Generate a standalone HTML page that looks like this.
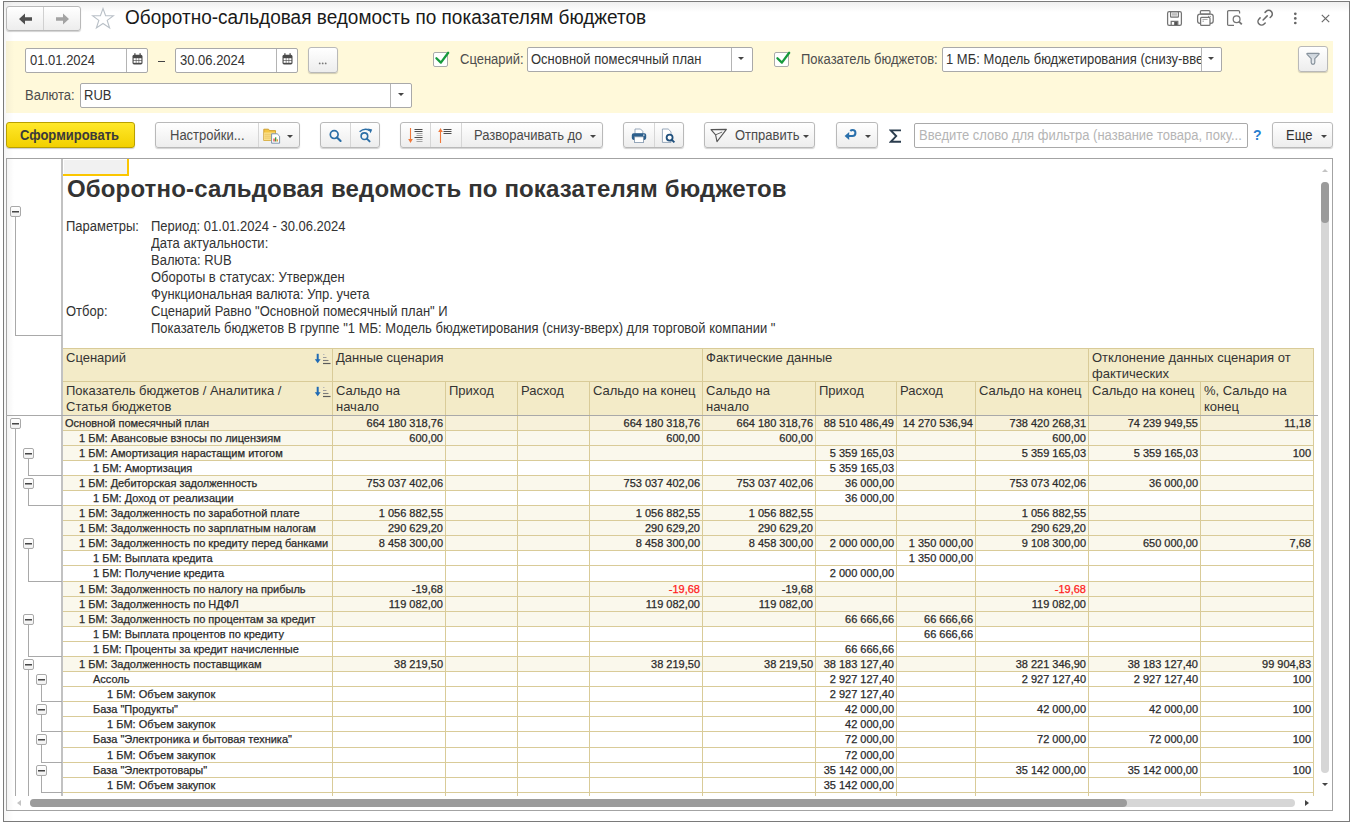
<!DOCTYPE html>
<html><head><meta charset="utf-8">
<style>
*{box-sizing:border-box;}
html,body{margin:0;padding:0;}
body{width:1350px;height:822px;position:relative;overflow:hidden;background:#fff;font-family:"Liberation Sans",sans-serif;color:#333;}
.a{position:absolute;}
#win{left:3px;top:1px;width:1347px;height:821px;border:1px solid #7a7a7a;}
#tgrad{left:4px;top:2px;width:1345px;height:10px;background:linear-gradient(#f0f0f0,#ffffff);}
.btn{position:absolute;border:1px solid #b9b9b9;border-radius:3px;background:linear-gradient(#ffffff,#ededed);box-shadow:0 1px 1px rgba(0,0,0,0.18);}
.sep{position:absolute;top:0;bottom:0;width:1px;background:#d0d0d0;}
.fld{position:absolute;border:1px solid #a9a9a9;border-radius:2px;background:#fff;font-size:13px;color:#333;}
.lbl{position:absolute;font-size:13px;color:#4d4d4d;white-space:nowrap;}
.t13{font-size:13px;white-space:nowrap;}
.ty{transform:scaleY(1.1);transform-origin:0 80%;}
#ypanel{left:6px;top:41px;width:1327px;height:72px;background:linear-gradient(90deg,#f6f0d3,#fff9da 8px);}
</style><style>
.gbox{width:11px;height:11px;border:1px solid #a9a9a9;border-radius:2px;background:linear-gradient(#ffffff,#f0f0f0);}
.gbox:after{content:"";position:absolute;left:1px;top:4px;width:7px;height:1px;background:#474747;box-shadow:0 1px 0 #9a9a9a;}
.r{font-size:11px;line-height:14px;color:#2a2a2a;white-space:nowrap;-webkit-text-stroke-width:0.25px;}
</style></head>
<body>
<div id="win" class="a"></div>
<div id="tgrad" class="a"></div>
<div class="a" style="left:4px;top:2px;width:10px;height:819px;background:linear-gradient(90deg,rgba(0,0,0,0.035),rgba(0,0,0,0));"></div>

<!-- nav -->
<div class="btn" style="left:6px;top:6px;width:75px;height:25px;">
  <div class="sep" style="left:36px;"></div>
  <svg class="a" style="left:11px;top:6px" width="16" height="12" viewBox="0 0 16 12"><path d="M1 6 L7 0.5 L7 4.3 L14 4.3 L14 7.7 L7 7.7 L7 11.5 Z" fill="#4f4f4f"/></svg>
  <svg class="a" style="left:47px;top:6px" width="16" height="12" viewBox="0 0 16 12"><path d="M15 6 L9 0.5 L9 4.3 L2 4.3 L2 7.7 L9 7.7 L9 11.5 Z" fill="#a3a3a3"/></svg>
</div>
<svg class="a" style="left:91px;top:7px" width="24" height="23" viewBox="0 0 24 23"><path d="M12 1.5 L14.6 8.6 L22.5 8.7 L16.2 13.4 L18.6 21 L12 16.5 L5.4 21 L7.8 13.4 L1.5 8.7 L9.4 8.6 Z" fill="none" stroke="#b9c0c7" stroke-width="1.1"/></svg>
<div class="a" style="left:125px;top:7px;font-size:19px;color:#1a1a1a;white-space:nowrap;transform:scaleY(1.08);transform-origin:0 80%;">Оборотно-сальдовая ведомость по показателям бюджетов</div>

<!-- title right icons -->
<svg class="a" style="left:1166px;top:10px" width="17" height="17" viewBox="0 0 17 17" fill="none" stroke="#747474" stroke-width="1.25">
  <rect x="1.6" y="1.6" width="13.8" height="13.8" rx="1.6"/>
  <rect x="4.6" y="1.6" width="7.8" height="5.6" rx="0.6"/>
  <path d="M6 3.3H11M6 4.6H11M6 5.9H11" stroke-width="0.7" stroke="#9a9a9a"/>
  <path d="M5.2 15.4V11.4H11.8V15.4"/>
  <rect x="8.2" y="12" width="3.2" height="3" fill="#555" stroke="none"/>
</svg>
<svg class="a" style="left:1196px;top:9px" width="19" height="18" viewBox="0 0 19 18" fill="none" stroke="#747474" stroke-width="1.25">
  <rect x="4.4" y="1.6" width="9.6" height="3.6" rx="1"/>
  <rect x="1.6" y="5.2" width="15.6" height="9.2" rx="2.4"/>
  <rect x="4.6" y="8.4" width="9.4" height="8" rx="1" fill="#fff"/>
  <path d="M6.4 10.4H11.6M6.4 12.2H8" stroke-width="0.8" stroke="#8c8c8c"/>
  <path d="M12.6 6.9V8M14.2 6.9V8" stroke-width="0.9"/>
</svg>
<svg class="a" style="left:1226px;top:9px" width="18" height="18" viewBox="0 0 18 18" fill="none" stroke="#747474" stroke-width="1.25">
  <path d="M8 16.4H2.8Q1.6 16.4 1.6 15.2V2.8Q1.6 1.6 2.8 1.6H12.4Q13.6 1.6 13.6 2.8V4.6"/>
  <circle cx="10.6" cy="10.2" r="3.4"/>
  <path d="M13 12.6L15.8 15.4" stroke-width="1.8"/>
</svg>
<svg class="a" style="left:1256px;top:9px" width="18" height="18" viewBox="0 0 18 18" fill="none" stroke="#6a6a6a" stroke-width="1.5" stroke-linecap="round">
  <path d="M4.1 8.9L3.05 9.95A3.6 3.6 0 0 0 8.15 15.05L9.2 14"/>
  <path d="M9.1 3.4L10.15 2.35A3.6 3.6 0 0 1 15.25 7.45L14.2 8.5"/>
  <path d="M7.1 11L11.2 6.9"/>
</svg>
<svg class="a" style="left:1292px;top:11px" width="7" height="15" viewBox="0 0 7 15"><circle cx="3.3" cy="2.8" r="1.35" fill="#666"/><circle cx="3.3" cy="7.4" r="1.35" fill="#666"/><circle cx="3.3" cy="12" r="1.35" fill="#666"/></svg>
<svg class="a" style="left:1320px;top:13px" width="11" height="11" viewBox="0 0 11 11"><path d="M1.8 1.8L9.2 9.2M9.2 1.8L1.8 9.2" stroke="#6a6a6a" stroke-width="1.2"/></svg>

<!-- yellow panel -->
<div id="ypanel" class="a"></div>
<div class="fld" style="left:25px;top:48px;width:123px;height:25px;">
  <div class="a ty" style="left:4px;top:4px;">01.01.2024</div>
  <div class="sep" style="left:100px;background:#b4b4b4"></div>
  <svg class="a" style="left:106px;top:4px" width="11" height="12" viewBox="0 0 11 12"><rect x="0.5" y="1.8" width="10" height="9.6" rx="1.6" fill="#4a4a4a"/><g fill="#fff"><rect x="1.6" y="5.2" width="2.2" height="2"/><rect x="4.4" y="5.2" width="2.2" height="2"/><rect x="7.2" y="5.2" width="2.2" height="2"/><rect x="1.6" y="7.8" width="2.2" height="2"/><rect x="4.4" y="7.8" width="2.2" height="2"/><rect x="7.2" y="7.8" width="2.2" height="2"/></g><rect x="2.3" y="0.2" width="1.2" height="3" fill="#4a4a4a"/><rect x="7.5" y="0.2" width="1.2" height="3" fill="#4a4a4a"/></svg>
</div>
<div class="a" style="left:158px;top:61px;width:7px;height:1px;background:#444"></div>
<div class="fld" style="left:175px;top:48px;width:123px;height:25px;">
  <div class="a ty" style="left:4px;top:4px;">30.06.2024</div>
  <div class="sep" style="left:100px;background:#b4b4b4"></div>
  <svg class="a" style="left:106px;top:4px" width="11" height="12" viewBox="0 0 11 12"><rect x="0.5" y="1.8" width="10" height="9.6" rx="1.6" fill="#4a4a4a"/><g fill="#fff"><rect x="1.6" y="5.2" width="2.2" height="2"/><rect x="4.4" y="5.2" width="2.2" height="2"/><rect x="7.2" y="5.2" width="2.2" height="2"/><rect x="1.6" y="7.8" width="2.2" height="2"/><rect x="4.4" y="7.8" width="2.2" height="2"/><rect x="7.2" y="7.8" width="2.2" height="2"/></g><rect x="2.3" y="0.2" width="1.2" height="3" fill="#4a4a4a"/><rect x="7.5" y="0.2" width="1.2" height="3" fill="#4a4a4a"/></svg>
</div>
<div class="btn" style="left:308px;top:47px;width:30px;height:26px;">
  <svg class="a" style="left:9px;top:14px" width="11" height="4" viewBox="0 0 11 4"><circle cx="1.7" cy="1.4" r="0.9" fill="#777"/><circle cx="4.7" cy="1.4" r="0.9" fill="#777"/><circle cx="7.7" cy="1.4" r="0.9" fill="#777"/></svg>
</div>
<div class="a chk" style="left:433px;top:52px;width:15px;height:15px;border:1px solid #ababab;border-radius:2px;background:#fff;">
  <svg class="a" style="left:-1px;top:-4px;overflow:visible" width="17" height="17" viewBox="0 0 17 17"><path d="M3.4 9.2L7.9 13.6L15.2 3.8" fill="none" stroke="#179a3c" stroke-width="2.3" stroke-linecap="round" stroke-linejoin="round"/></svg>
</div>
<div class="lbl ty" style="left:460px;top:52px;">Сценарий:</div>
<div class="fld" style="left:527px;top:47px;width:226px;height:25px;">
  <div class="a ty" style="left:3px;top:4px;">Основной помесячный план</div>
  <div class="sep" style="left:203px;background:#b4b4b4"></div>
  <div class="a" style="left:210px;top:9px;width:0;height:0;border-left:3px solid transparent;border-right:3px solid transparent;border-top:3px solid #444"></div>
</div>
<div class="a chk" style="left:774px;top:52px;width:15px;height:15px;border:1px solid #ababab;border-radius:2px;background:#fff;">
  <svg class="a" style="left:-1px;top:-4px;overflow:visible" width="17" height="17" viewBox="0 0 17 17"><path d="M3.4 9.2L7.9 13.6L15.2 3.8" fill="none" stroke="#179a3c" stroke-width="2.3" stroke-linecap="round" stroke-linejoin="round"/></svg>
</div>
<div class="lbl ty" style="left:801px;top:52px;">Показатель бюджетов:</div>
<div class="fld" style="left:942px;top:47px;width:280px;height:25px;overflow:hidden;">
  <div class="a ty" style="left:3px;top:4px;width:256px;overflow:hidden;white-space:nowrap;">1 МБ: Модель бюджетирования (снизу-вверх)</div>
  <div class="sep" style="left:258px;background:#b4b4b4"></div>
  <div class="a" style="left:265px;top:9px;width:0;height:0;border-left:3px solid transparent;border-right:3px solid transparent;border-top:3px solid #444"></div>
</div>
<div class="btn" style="left:1298px;top:46px;width:30px;height:26px;">
  <svg class="a" style="left:7px;top:5px" width="15" height="14" viewBox="0 0 15 14"><defs><linearGradient id="fg" x1="0" y1="0" x2="0" y2="1"><stop offset="0" stop-color="#c9d1d9"/><stop offset="1" stop-color="#eef1f4"/></linearGradient></defs><path d="M1.6 1.3H12.4Q13.6 1.3 12.9 2.3L8.8 6.6V10.6Q8.8 12.3 7 12.3Q5.2 12.3 5.2 10.6V6.6L1.1 2.3Q0.4 1.3 1.6 1.3Z" fill="url(#fg)" stroke="#87929c" stroke-width="1.2" stroke-linejoin="round"/></svg>
</div>
<div class="lbl ty" style="left:25px;top:88px;">Валюта:</div>
<div class="fld" style="left:80px;top:83px;width:332px;height:25px;">
  <div class="a ty" style="left:3px;top:4px;">RUB</div>
  <div class="sep" style="left:309px;background:#b4b4b4"></div>
  <div class="a" style="left:317px;top:9px;width:0;height:0;border-left:3px solid transparent;border-right:3px solid transparent;border-top:3px solid #444"></div>
</div>

<!-- toolbar -->
<div class="a" style="left:6px;top:122px;width:129px;height:26px;border:1px solid #b9a000;border-radius:3px;background:linear-gradient(#ffe82a,#f2d000);box-shadow:0 1px 1px rgba(0,0,0,0.2);">
  <div class="a t13 ty" style="left:13px;top:5px;font-weight:bold;color:#3a3a3a;">Сформировать</div>
</div>
<div class="btn" style="left:155px;top:122px;width:145px;height:26px;">
  <div class="a t13 ty" style="left:14px;top:5px;color:#4a4a4a;">Настройки...</div>
  <div class="sep" style="left:102px;background:#d6d6d6"></div>
  <svg class="a" style="left:107px;top:4px" width="19" height="17" viewBox="0 0 19 17">
    <path d="M0.8 2.2H5.5L6.6 3.6H12.5V13.5H0.8Z" fill="#f4c542" stroke="#c99a2a" stroke-width="0.9"/>
    <path d="M1 5.5H12.3V13.3H1Z" fill="#fbe08a"/>
    <path d="M1.5 7.3H12M1.5 9.2H12M1.5 11.1H12" stroke="#e2b850" stroke-width="0.6"/>
    <path d="M8.6 6.8H14.2L16.6 9.2V16.2H8.6Z" fill="#fff" stroke="#6f8aa6" stroke-width="0.9"/>
    <rect x="10.4" y="11.5" width="1.3" height="3" fill="#e04040"/><rect x="12" y="10.3" width="1.3" height="4.2" fill="#40a040"/><rect x="13.6" y="12.3" width="1.3" height="2.2" fill="#e09030"/>
  </svg>
  <div class="a" style="left:131px;top:12px;width:0;height:0;border-left:3px solid transparent;border-right:3px solid transparent;border-top:3px solid #444"></div>
</div>
<div class="btn" style="left:320px;top:122px;width:60px;height:26px;">
  <div class="sep" style="left:29px;background:#d6d6d6"></div>
  <svg class="a" style="left:7px;top:5px" width="15" height="15" viewBox="0 0 15 15"><circle cx="6.2" cy="6.6" r="3.9" fill="none" stroke="#2b6ea6" stroke-width="1.7"/><path d="M9 9.4L12.6 13" stroke="#2b6ea6" stroke-width="2.1" stroke-linecap="round"/></svg>
  <svg class="a" style="left:36px;top:4px" width="17" height="17" viewBox="0 0 17 17"><circle cx="7.4" cy="9.2" r="3.3" fill="none" stroke="#2b6ea6" stroke-width="1.6"/><path d="M9.8 11.6L12.6 14.4" stroke="#2b6ea6" stroke-width="1.9" stroke-linecap="round"/><path d="M2.6 4.8Q7.6 0.6 12.6 3.6" fill="none" stroke="#2b6ea6" stroke-width="1.5"/><path d="M11 1.6L15.2 2.4L13.6 6.2Z" fill="#2b6ea6"/></svg>
</div>
<div class="btn" style="left:400px;top:122px;width:203px;height:26px;">
  <div class="sep" style="left:29px;background:#d6d6d6"></div>
  <div class="sep" style="left:60px;background:#d6d6d6"></div>
  <svg class="a" style="left:5px;top:4px" width="20" height="18" viewBox="0 0 20 18"><path d="M4.5 1V14" stroke="#f0783a" stroke-width="1.1"/><path d="M2.2 12L4.5 16L6.8 12Z" fill="#f0783a"/><path d="M8.5 2.5H16.5M8.5 4.5H16.5M8.5 10.5H16.5" stroke="#3a3a3a" stroke-width="0.9"/><path d="M10.5 6.5H16.5M10.5 8.5H16.5M10.5 12.5H16.5M10.5 14.5H16.5" stroke="#9a9a9a" stroke-width="0.9"/></svg>
  <svg class="a" style="left:35px;top:4px" width="20" height="18" viewBox="0 0 20 18"><path d="M4.5 4V16" stroke="#f0783a" stroke-width="1.1"/><path d="M2.2 5L4.5 1L6.8 5Z" fill="#f0783a"/><path d="M7.5 2.5H15.5M7.5 4.5H15.5M7.5 6.5H15.5" stroke="#3a3a3a" stroke-width="0.9"/></svg>
  <div class="a t13 ty" style="left:73px;top:5px;color:#4a4a4a;">Разворачивать до</div>
  <div class="a" style="left:189px;top:12px;width:0;height:0;border-left:3px solid transparent;border-right:3px solid transparent;border-top:3px solid #444"></div>
</div>
<div class="btn" style="left:623px;top:122px;width:61px;height:26px;">
  <div class="sep" style="left:30px;background:#d6d6d6"></div>
  <svg class="a" style="left:7px;top:5px" width="16" height="16" viewBox="0 0 16 16"><path d="M4 1H9.5L11.8 3.3V6H4Z" fill="#fff" stroke="#7d93aa" stroke-width="0.8"/><rect x="0.8" y="5.3" width="14.4" height="6.6" rx="1.8" fill="#2c5f8c"/><rect x="3.6" y="8.8" width="8.8" height="5.8" fill="#fff" stroke="#7d93aa" stroke-width="0.8"/><rect x="12" y="6.6" width="1.6" height="1" fill="#fff"/></svg>
  <svg class="a" style="left:37px;top:5px" width="16" height="16" viewBox="0 0 16 16"><path d="M1.4 1H7.2L10 3.8V14.4H1.4Z" fill="#fff" stroke="#7d93aa" stroke-width="0.8"/><circle cx="8.6" cy="9.6" r="3" fill="#fff" stroke="#1f4f7c" stroke-width="1.8"/><path d="M10.6 11.6L13.4 14.4" stroke="#1f4f7c" stroke-width="2"/></svg>
</div>
<div class="btn" style="left:704px;top:122px;width:111px;height:26px;">
  <svg class="a" style="left:5px;top:5px" width="18" height="15" viewBox="0 0 18 15"><path d="M1 1.6L16.4 1.4L7 13.6L5.6 6.8Z" fill="none" stroke="#555" stroke-width="1.1" stroke-linejoin="round"/><path d="M5.6 6.8L12.2 4" stroke="#555" stroke-width="0.9"/></svg>
  <div class="a t13 ty" style="left:30px;top:5px;color:#4a4a4a;">Отправить</div>
  <div class="a" style="left:98px;top:12px;width:0;height:0;border-left:3px solid transparent;border-right:3px solid transparent;border-top:3px solid #444"></div>
</div>
<div class="btn" style="left:836px;top:122px;width:42px;height:26px;">
  <svg class="a" style="left:7px;top:5px" width="14" height="13" viewBox="0 0 14 13"><path d="M4.5 8H8.4Q11.4 8 11.4 5Q11.4 2 8.6 2Q7.2 2 6.3 2.9" fill="none" stroke="#2a70ac" stroke-width="2.1"/><path d="M0.6 8L5.2 4.1V11.9Z" fill="#2a70ac"/></svg>
  <div class="a" style="left:28px;top:12px;width:0;height:0;border-left:3px solid transparent;border-right:3px solid transparent;border-top:3px solid #444"></div>
</div>
<svg class="a" style="left:889px;top:128px" width="14" height="16" viewBox="0 0 14 16"><path d="M12 2.4H1.8L7.2 8.1L1.8 13.8H12" fill="none" stroke="#2b3d4e" stroke-width="1.9" stroke-linejoin="miter"/></svg>
<div class="fld" style="left:914px;top:123px;width:334px;height:25px;">
  <div class="a ty" style="left:4px;top:4px;color:#b5b5b5;">Введите слово для фильтра (название товара, поку...</div>
</div>
<div class="a" style="left:1253px;top:127px;font-size:14px;font-weight:bold;color:#2a7fd0;">?</div>
<div class="btn" style="left:1272px;top:122px;width:61px;height:26px;">
  <div class="a t13 ty" style="left:13px;top:5px;color:#333;">Еще</div>
  <div class="a" style="left:48px;top:12px;width:0;height:0;border-left:3px solid transparent;border-right:3px solid transparent;border-top:3px solid #444"></div>
</div>

<!-- report -->
<div class="a" style="left:6px;top:158px;width:1327px;height:653px;border:1px solid #a3a3a3;background:#fff;"></div>
<div class="a" style="left:7px;top:159px;width:7px;height:651px;background:linear-gradient(90deg,rgba(0,0,0,0.045),rgba(0,0,0,0));"></div>
<div class="a" style="left:63px;top:159px;width:66px;height:17px;background:#f1f1f1;border-right:2px solid #fbc600;border-bottom:2px solid #fbc600;box-shadow:inset 1px 1px 0 #fff;"></div>
<div class="a" style="left:67px;top:175px;font-size:24px;font-weight:bold;color:#333;white-space:nowrap;letter-spacing:0.15px;">Оборотно-сальдовая ведомость по показателям бюджетов</div>
<div class="a" style="left:66px;top:219px;font-size:13px;color:#333;white-space:nowrap;line-height:16px;transform:scaleY(1.1);transform-origin:0 12.5px;">Параметры:</div>
<div class="a" style="left:151px;top:219px;font-size:13px;color:#333;white-space:nowrap;line-height:16px;transform:scaleY(1.1);transform-origin:0 12.5px;">Период: 01.01.2024 - 30.06.2024</div>
<div class="a" style="left:151px;top:236px;font-size:13px;color:#333;white-space:nowrap;line-height:16px;transform:scaleY(1.1);transform-origin:0 12.5px;">Дата актуальности:</div>
<div class="a" style="left:151px;top:253px;font-size:13px;color:#333;white-space:nowrap;line-height:16px;transform:scaleY(1.1);transform-origin:0 12.5px;">Валюта: RUB</div>
<div class="a" style="left:151px;top:270px;font-size:13px;color:#333;white-space:nowrap;line-height:16px;transform:scaleY(1.1);transform-origin:0 12.5px;">Обороты в статусах: Утвержден</div>
<div class="a" style="left:151px;top:287px;font-size:13px;color:#333;white-space:nowrap;line-height:16px;transform:scaleY(1.1);transform-origin:0 12.5px;">Функциональная валюта: Упр. учета</div>
<div class="a" style="left:66px;top:304px;font-size:13px;color:#333;white-space:nowrap;line-height:16px;transform:scaleY(1.1);transform-origin:0 12.5px;">Отбор:</div>
<div class="a" style="left:151px;top:304px;font-size:13px;color:#333;white-space:nowrap;line-height:16px;transform:scaleY(1.1);transform-origin:0 12.5px;">Сценарий Равно "Основной помесячный план" И</div>
<div class="a" style="left:151px;top:321px;font-size:13px;color:#333;white-space:nowrap;line-height:16px;transform:scaleY(1.1);transform-origin:0 12.5px;">Показатель бюджетов В группе "1 МБ: Модель бюджетирования (снизу-вверх) для торговой компании "</div>
<div class="a" style="left:61px;top:159px;width:2px;height:637px;background:#c2c2c2;"></div>
<div class="a gbox" style="left:10px;top:206px;"></div>
<div class="a" style="left:15px;top:216px;width:1px;height:120px;background:#a9a9a9;"></div>
<div class="a" style="left:15px;top:335px;width:47px;height:1px;background:#a9a9a9;"></div>
<div class="a" style="left:63px;top:348px;width:1251px;height:67px;background:#f3ebc8;"></div>
<div class="a" style="left:63px;top:348px;width:1251px;height:1px;background:#d9cb98;"></div>
<div class="a" style="left:63px;top:381px;width:1251px;height:1px;background:#d9cb98;"></div>
<div class="a" style="left:66px;top:350px;font-size:13px;line-height:16px;color:#333;white-space:nowrap;">Сценарий</div>
<div class="a" style="left:66px;top:383px;font-size:13px;line-height:16px;color:#333;white-space:nowrap;">Показатель бюджетов / Аналитика /<br>Статья бюджетов</div>
<div class="a" style="left:336px;top:350px;font-size:13px;line-height:16px;color:#333;white-space:nowrap;">Данные сценария</div>
<div class="a" style="left:706px;top:350px;font-size:13px;line-height:16px;color:#333;white-space:nowrap;">Фактические данные</div>
<div class="a" style="left:1092px;top:350px;font-size:13px;line-height:16px;color:#333;white-space:nowrap;">Отклонение данных сценария от<br>фактических</div>
<div class="a" style="left:336px;top:383px;font-size:13px;line-height:16px;color:#333;white-space:nowrap;">Сальдо на<br>начало</div>
<div class="a" style="left:449px;top:383px;font-size:13px;line-height:16px;color:#333;white-space:nowrap;">Приход</div>
<div class="a" style="left:521px;top:383px;font-size:13px;line-height:16px;color:#333;white-space:nowrap;">Расход</div>
<div class="a" style="left:593px;top:383px;font-size:13px;line-height:16px;color:#333;white-space:nowrap;">Сальдо на конец</div>
<div class="a" style="left:706px;top:383px;font-size:13px;line-height:16px;color:#333;white-space:nowrap;">Сальдо на<br>начало</div>
<div class="a" style="left:819px;top:383px;font-size:13px;line-height:16px;color:#333;white-space:nowrap;">Приход</div>
<div class="a" style="left:900px;top:383px;font-size:13px;line-height:16px;color:#333;white-space:nowrap;">Расход</div>
<div class="a" style="left:979px;top:383px;font-size:13px;line-height:16px;color:#333;white-space:nowrap;">Сальдо на конец</div>
<div class="a" style="left:1092px;top:383px;font-size:13px;line-height:16px;color:#333;white-space:nowrap;">Сальдо на конец</div>
<div class="a" style="left:1204px;top:383px;font-size:13px;line-height:16px;color:#333;white-space:nowrap;">%, Сальдо на<br>конец</div>
<svg class="a" style="left:314px;top:353px" width="17" height="12" viewBox="0 0 17 12"><path d="M3.7 0.8V7" stroke="#1f6ab4" stroke-width="2"/><path d="M0.8 6.2L3.7 10.2L6.6 6.2Z" fill="#1f6ab4"/><path d="M9 1.5H10.5" stroke="#b8b8b8" stroke-width="1"/><path d="M9 4.5H12.5" stroke="#9a9a9a" stroke-width="1"/><path d="M9 7.5H14.5" stroke="#7a7a7a" stroke-width="1.1"/><path d="M9 10.5H16.5" stroke="#5a5a5a" stroke-width="1.2"/></svg>
<svg class="a" style="left:314px;top:386px" width="17" height="12" viewBox="0 0 17 12"><path d="M3.7 0.8V7" stroke="#1f6ab4" stroke-width="2"/><path d="M0.8 6.2L3.7 10.2L6.6 6.2Z" fill="#1f6ab4"/><path d="M9 1.5H10.5" stroke="#b8b8b8" stroke-width="1"/><path d="M9 4.5H12.5" stroke="#9a9a9a" stroke-width="1"/><path d="M9 7.5H14.5" stroke="#7a7a7a" stroke-width="1.1"/><path d="M9 10.5H16.5" stroke="#5a5a5a" stroke-width="1.2"/></svg>
<div class="a" style="left:332px;top:348px;width:1px;height:67px;background:#d9cb98;"></div>
<div class="a" style="left:702px;top:348px;width:1px;height:67px;background:#d9cb98;"></div>
<div class="a" style="left:1088px;top:348px;width:1px;height:67px;background:#d9cb98;"></div>
<div class="a" style="left:445px;top:381px;width:1px;height:34px;background:#d9cb98;"></div>
<div class="a" style="left:517px;top:381px;width:1px;height:34px;background:#d9cb98;"></div>
<div class="a" style="left:589px;top:381px;width:1px;height:34px;background:#d9cb98;"></div>
<div class="a" style="left:815px;top:381px;width:1px;height:34px;background:#d9cb98;"></div>
<div class="a" style="left:896px;top:381px;width:1px;height:34px;background:#d9cb98;"></div>
<div class="a" style="left:975px;top:381px;width:1px;height:34px;background:#d9cb98;"></div>
<div class="a" style="left:1200px;top:381px;width:1px;height:34px;background:#d9cb98;"></div>
<div class="a" style="left:1313px;top:348px;width:1px;height:67px;background:#d9cb98;"></div>
<div class="a" style="left:63px;top:416px;width:1250px;height:14px;background:#f7f1da;"></div>
<div class="a" style="left:63px;top:431px;width:1250px;height:14px;background:#faf8ec;"></div>
<div class="a" style="left:63px;top:446px;width:1250px;height:14px;background:#faf8ec;"></div>
<div class="a" style="left:63px;top:476px;width:1250px;height:14px;background:#faf8ec;"></div>
<div class="a" style="left:63px;top:506px;width:1250px;height:14px;background:#faf8ec;"></div>
<div class="a" style="left:63px;top:521px;width:1250px;height:14px;background:#faf8ec;"></div>
<div class="a" style="left:63px;top:536px;width:1250px;height:14px;background:#faf8ec;"></div>
<div class="a" style="left:63px;top:582px;width:1250px;height:14px;background:#faf8ec;"></div>
<div class="a" style="left:63px;top:597px;width:1250px;height:14px;background:#faf8ec;"></div>
<div class="a" style="left:63px;top:612px;width:1250px;height:14px;background:#faf8ec;"></div>
<div class="a" style="left:63px;top:657px;width:1250px;height:14px;background:#faf8ec;"></div>
<div class="a" style="left:63px;top:430px;width:1251px;height:1px;background:#d9cb98;"></div>
<div class="a" style="left:63px;top:445px;width:1251px;height:1px;background:#d9cb98;"></div>
<div class="a" style="left:63px;top:460px;width:1251px;height:1px;background:#d9cb98;"></div>
<div class="a" style="left:63px;top:475px;width:1251px;height:1px;background:#d9cb98;"></div>
<div class="a" style="left:63px;top:490px;width:1251px;height:1px;background:#d9cb98;"></div>
<div class="a" style="left:63px;top:505px;width:1251px;height:1px;background:#d9cb98;"></div>
<div class="a" style="left:63px;top:520px;width:1251px;height:1px;background:#d9cb98;"></div>
<div class="a" style="left:63px;top:535px;width:1251px;height:1px;background:#d9cb98;"></div>
<div class="a" style="left:63px;top:550px;width:1251px;height:1px;background:#d9cb98;"></div>
<div class="a" style="left:63px;top:565px;width:1251px;height:1px;background:#d9cb98;"></div>
<div class="a" style="left:63px;top:581px;width:1251px;height:1px;background:#d9cb98;"></div>
<div class="a" style="left:63px;top:596px;width:1251px;height:1px;background:#d9cb98;"></div>
<div class="a" style="left:63px;top:611px;width:1251px;height:1px;background:#d9cb98;"></div>
<div class="a" style="left:63px;top:626px;width:1251px;height:1px;background:#d9cb98;"></div>
<div class="a" style="left:63px;top:641px;width:1251px;height:1px;background:#d9cb98;"></div>
<div class="a" style="left:63px;top:656px;width:1251px;height:1px;background:#d9cb98;"></div>
<div class="a" style="left:63px;top:671px;width:1251px;height:1px;background:#d9cb98;"></div>
<div class="a" style="left:63px;top:686px;width:1251px;height:1px;background:#d9cb98;"></div>
<div class="a" style="left:63px;top:701px;width:1251px;height:1px;background:#d9cb98;"></div>
<div class="a" style="left:63px;top:716px;width:1251px;height:1px;background:#d9cb98;"></div>
<div class="a" style="left:63px;top:731px;width:1251px;height:1px;background:#d9cb98;"></div>
<div class="a" style="left:63px;top:747px;width:1251px;height:1px;background:#d9cb98;"></div>
<div class="a" style="left:63px;top:762px;width:1251px;height:1px;background:#d9cb98;"></div>
<div class="a" style="left:63px;top:777px;width:1251px;height:1px;background:#d9cb98;"></div>
<div class="a" style="left:63px;top:792px;width:1251px;height:1px;background:#d9cb98;"></div>
<div class="a" style="left:6px;top:415px;width:1312px;height:1px;background:#a9a9a9;"></div>
<div class="a" style="left:332px;top:416px;width:1px;height:380px;background:#d9cb98;"></div>
<div class="a" style="left:445px;top:416px;width:1px;height:380px;background:#d9cb98;"></div>
<div class="a" style="left:517px;top:416px;width:1px;height:380px;background:#d9cb98;"></div>
<div class="a" style="left:589px;top:416px;width:1px;height:380px;background:#d9cb98;"></div>
<div class="a" style="left:702px;top:416px;width:1px;height:380px;background:#d9cb98;"></div>
<div class="a" style="left:815px;top:416px;width:1px;height:380px;background:#d9cb98;"></div>
<div class="a" style="left:896px;top:416px;width:1px;height:380px;background:#d9cb98;"></div>
<div class="a" style="left:975px;top:416px;width:1px;height:380px;background:#d9cb98;"></div>
<div class="a" style="left:1088px;top:416px;width:1px;height:380px;background:#d9cb98;"></div>
<div class="a" style="left:1200px;top:416px;width:1px;height:380px;background:#d9cb98;"></div>
<div class="a" style="left:1313px;top:416px;width:1px;height:380px;background:#d9cb98;"></div>
<div class="a r" style="left:65px;top:416px;">Основной помесячный план</div>
<div class="a r" style="right:907px;top:416px;">664 180 318,76</div>
<div class="a r" style="right:650px;top:416px;">664 180 318,76</div>
<div class="a r" style="right:537px;top:416px;">664 180 318,76</div>
<div class="a r" style="right:456px;top:416px;">88 510 486,49</div>
<div class="a r" style="right:377px;top:416px;">14 270 536,94</div>
<div class="a r" style="right:264px;top:416px;">738 420 268,31</div>
<div class="a r" style="right:152px;top:416px;">74 239 949,55</div>
<div class="a r" style="right:39px;top:416px;">11,18</div>
<div class="a r" style="left:79px;top:431px;">1 БМ: Авансовые взносы по лицензиям</div>
<div class="a r" style="right:907px;top:431px;">600,00</div>
<div class="a r" style="right:650px;top:431px;">600,00</div>
<div class="a r" style="right:537px;top:431px;">600,00</div>
<div class="a r" style="right:264px;top:431px;">600,00</div>
<div class="a r" style="left:79px;top:446px;">1 БМ: Амортизация нарастащим итогом</div>
<div class="a r" style="right:456px;top:446px;">5 359 165,03</div>
<div class="a r" style="right:264px;top:446px;">5 359 165,03</div>
<div class="a r" style="right:152px;top:446px;">5 359 165,03</div>
<div class="a r" style="right:39px;top:446px;">100</div>
<div class="a r" style="left:93px;top:461px;">1 БМ: Амортизация</div>
<div class="a r" style="right:456px;top:461px;">5 359 165,03</div>
<div class="a r" style="left:79px;top:476px;">1 БМ: Дебиторская задолженность</div>
<div class="a r" style="right:907px;top:476px;">753 037 402,06</div>
<div class="a r" style="right:650px;top:476px;">753 037 402,06</div>
<div class="a r" style="right:537px;top:476px;">753 037 402,06</div>
<div class="a r" style="right:456px;top:476px;">36 000,00</div>
<div class="a r" style="right:264px;top:476px;">753 073 402,06</div>
<div class="a r" style="right:152px;top:476px;">36 000,00</div>
<div class="a r" style="left:93px;top:491px;">1 БМ: Доход от реализации</div>
<div class="a r" style="right:456px;top:491px;">36 000,00</div>
<div class="a r" style="left:79px;top:506px;">1 БМ: Задолженность по заработной плате</div>
<div class="a r" style="right:907px;top:506px;">1 056 882,55</div>
<div class="a r" style="right:650px;top:506px;">1 056 882,55</div>
<div class="a r" style="right:537px;top:506px;">1 056 882,55</div>
<div class="a r" style="right:264px;top:506px;">1 056 882,55</div>
<div class="a r" style="left:79px;top:521px;">1 БМ: Задолженность по зарплатным налогам</div>
<div class="a r" style="right:907px;top:521px;">290 629,20</div>
<div class="a r" style="right:650px;top:521px;">290 629,20</div>
<div class="a r" style="right:537px;top:521px;">290 629,20</div>
<div class="a r" style="right:264px;top:521px;">290 629,20</div>
<div class="a r" style="left:79px;top:536px;">1 БМ: Задолженность по кредиту перед банками</div>
<div class="a r" style="right:907px;top:536px;">8 458 300,00</div>
<div class="a r" style="right:650px;top:536px;">8 458 300,00</div>
<div class="a r" style="right:537px;top:536px;">8 458 300,00</div>
<div class="a r" style="right:456px;top:536px;">2 000 000,00</div>
<div class="a r" style="right:377px;top:536px;">1 350 000,00</div>
<div class="a r" style="right:264px;top:536px;">9 108 300,00</div>
<div class="a r" style="right:152px;top:536px;">650 000,00</div>
<div class="a r" style="right:39px;top:536px;">7,68</div>
<div class="a r" style="left:93px;top:551px;">1 БМ: Выплата кредита</div>
<div class="a r" style="right:377px;top:551px;">1 350 000,00</div>
<div class="a r" style="left:93px;top:566px;">1 БМ: Получение кредита</div>
<div class="a r" style="right:456px;top:566px;">2 000 000,00</div>
<div class="a r" style="left:79px;top:582px;">1 БМ: Задолженность по налогу на прибыль</div>
<div class="a r" style="right:907px;top:582px;">-19,68</div>
<div class="a r" style="right:650px;top:582px;color:#ff2020;">-19,68</div>
<div class="a r" style="right:537px;top:582px;">-19,68</div>
<div class="a r" style="right:264px;top:582px;color:#ff2020;">-19,68</div>
<div class="a r" style="left:79px;top:597px;">1 БМ: Задолженность по НДФЛ</div>
<div class="a r" style="right:907px;top:597px;">119 082,00</div>
<div class="a r" style="right:650px;top:597px;">119 082,00</div>
<div class="a r" style="right:537px;top:597px;">119 082,00</div>
<div class="a r" style="right:264px;top:597px;">119 082,00</div>
<div class="a r" style="left:79px;top:612px;">1 БМ: Задолженность по процентам за кредит</div>
<div class="a r" style="right:456px;top:612px;">66 666,66</div>
<div class="a r" style="right:377px;top:612px;">66 666,66</div>
<div class="a r" style="left:93px;top:627px;">1 БМ: Выплата процентов по кредиту</div>
<div class="a r" style="right:377px;top:627px;">66 666,66</div>
<div class="a r" style="left:93px;top:642px;">1 БМ: Проценты за кредит начисленные</div>
<div class="a r" style="right:456px;top:642px;">66 666,66</div>
<div class="a r" style="left:79px;top:657px;">1 БМ: Задолженность поставщикам</div>
<div class="a r" style="right:907px;top:657px;">38 219,50</div>
<div class="a r" style="right:650px;top:657px;">38 219,50</div>
<div class="a r" style="right:537px;top:657px;">38 219,50</div>
<div class="a r" style="right:456px;top:657px;">38 183 127,40</div>
<div class="a r" style="right:264px;top:657px;">38 221 346,90</div>
<div class="a r" style="right:152px;top:657px;">38 183 127,40</div>
<div class="a r" style="right:39px;top:657px;">99 904,83</div>
<div class="a r" style="left:93px;top:672px;">Ассоль</div>
<div class="a r" style="right:456px;top:672px;">2 927 127,40</div>
<div class="a r" style="right:264px;top:672px;">2 927 127,40</div>
<div class="a r" style="right:152px;top:672px;">2 927 127,40</div>
<div class="a r" style="right:39px;top:672px;">100</div>
<div class="a r" style="left:107px;top:687px;">1 БМ: Объем закупок</div>
<div class="a r" style="right:456px;top:687px;">2 927 127,40</div>
<div class="a r" style="left:93px;top:702px;">База "Продукты"</div>
<div class="a r" style="right:456px;top:702px;">42 000,00</div>
<div class="a r" style="right:264px;top:702px;">42 000,00</div>
<div class="a r" style="right:152px;top:702px;">42 000,00</div>
<div class="a r" style="right:39px;top:702px;">100</div>
<div class="a r" style="left:107px;top:717px;">1 БМ: Объем закупок</div>
<div class="a r" style="right:456px;top:717px;">42 000,00</div>
<div class="a r" style="left:93px;top:732px;">База "Электроника и бытовая техника"</div>
<div class="a r" style="right:456px;top:732px;">72 000,00</div>
<div class="a r" style="right:264px;top:732px;">72 000,00</div>
<div class="a r" style="right:152px;top:732px;">72 000,00</div>
<div class="a r" style="right:39px;top:732px;">100</div>
<div class="a r" style="left:107px;top:748px;">1 БМ: Объем закупок</div>
<div class="a r" style="right:456px;top:748px;">72 000,00</div>
<div class="a r" style="left:93px;top:763px;">База "Электротовары"</div>
<div class="a r" style="right:456px;top:763px;">35 142 000,00</div>
<div class="a r" style="right:264px;top:763px;">35 142 000,00</div>
<div class="a r" style="right:152px;top:763px;">35 142 000,00</div>
<div class="a r" style="right:39px;top:763px;">100</div>
<div class="a r" style="left:107px;top:778px;">1 БМ: Объем закупок</div>
<div class="a r" style="right:456px;top:778px;">35 142 000,00</div>
<div class="a gbox" style="left:10px;top:418px;"></div>
<div class="a" style="left:15px;top:428px;width:1px;height:368px;background:#a9a9a9;"></div>
<div class="a gbox" style="left:23px;top:448px;"></div>
<div class="a" style="left:28px;top:458px;width:1px;height:18px;background:#a9a9a9;"></div>
<div class="a" style="left:28px;top:475px;width:34px;height:1px;background:#a9a9a9;"></div>
<div class="a gbox" style="left:23px;top:478px;"></div>
<div class="a" style="left:28px;top:488px;width:1px;height:18px;background:#a9a9a9;"></div>
<div class="a" style="left:28px;top:505px;width:34px;height:1px;background:#a9a9a9;"></div>
<div class="a gbox" style="left:23px;top:538px;"></div>
<div class="a" style="left:28px;top:548px;width:1px;height:34px;background:#a9a9a9;"></div>
<div class="a" style="left:28px;top:581px;width:34px;height:1px;background:#a9a9a9;"></div>
<div class="a gbox" style="left:23px;top:614px;"></div>
<div class="a" style="left:28px;top:624px;width:1px;height:33px;background:#a9a9a9;"></div>
<div class="a" style="left:28px;top:656px;width:34px;height:1px;background:#a9a9a9;"></div>
<div class="a gbox" style="left:23px;top:659px;"></div>
<div class="a" style="left:28px;top:669px;width:1px;height:127px;background:#a9a9a9;"></div>
<div class="a gbox" style="left:36px;top:674px;"></div>
<div class="a" style="left:41px;top:684px;width:1px;height:18px;background:#a9a9a9;"></div>
<div class="a" style="left:41px;top:701px;width:21px;height:1px;background:#a9a9a9;"></div>
<div class="a gbox" style="left:36px;top:704px;"></div>
<div class="a" style="left:41px;top:714px;width:1px;height:18px;background:#a9a9a9;"></div>
<div class="a" style="left:41px;top:731px;width:21px;height:1px;background:#a9a9a9;"></div>
<div class="a gbox" style="left:36px;top:734px;"></div>
<div class="a" style="left:41px;top:744px;width:1px;height:19px;background:#a9a9a9;"></div>
<div class="a" style="left:41px;top:762px;width:21px;height:1px;background:#a9a9a9;"></div>
<div class="a gbox" style="left:36px;top:765px;"></div>
<div class="a" style="left:41px;top:775px;width:1px;height:18px;background:#a9a9a9;"></div>
<div class="a" style="left:41px;top:792px;width:21px;height:1px;background:#a9a9a9;"></div>
<div class="a" style="left:30px;top:799px;width:1265px;height:8px;border-radius:4px;background:#d6d6d6;"></div>
<div class="a" style="left:30px;top:799px;width:1097px;height:8px;border-radius:4px;background:#9b9b9b;"></div>
<div class="a" style="left:17px;top:800px;width:0;height:0;border-top:3px solid transparent;border-bottom:3px solid transparent;border-right:4px solid #c4c4c4;"></div>
<div class="a" style="left:1305px;top:800px;width:0;height:0;border-top:3px solid transparent;border-bottom:3px solid transparent;border-left:4px solid #444;"></div>
<div class="a" style="left:1321px;top:182px;width:8px;height:591px;border-radius:4px;background:#d6d6d6;"></div>
<div class="a" style="left:1321px;top:182px;width:8px;height:41px;border-radius:4px;background:#9b9b9b;"></div>
<div class="a" style="left:1322px;top:169px;width:0;height:0;border-left:3px solid transparent;border-right:3px solid transparent;border-bottom:3px solid #c4c4c4;"></div>
<div class="a" style="left:1322px;top:783px;width:0;height:0;border-left:3px solid transparent;border-right:3px solid transparent;border-top:3px solid #444;"></div>

</body></html>
